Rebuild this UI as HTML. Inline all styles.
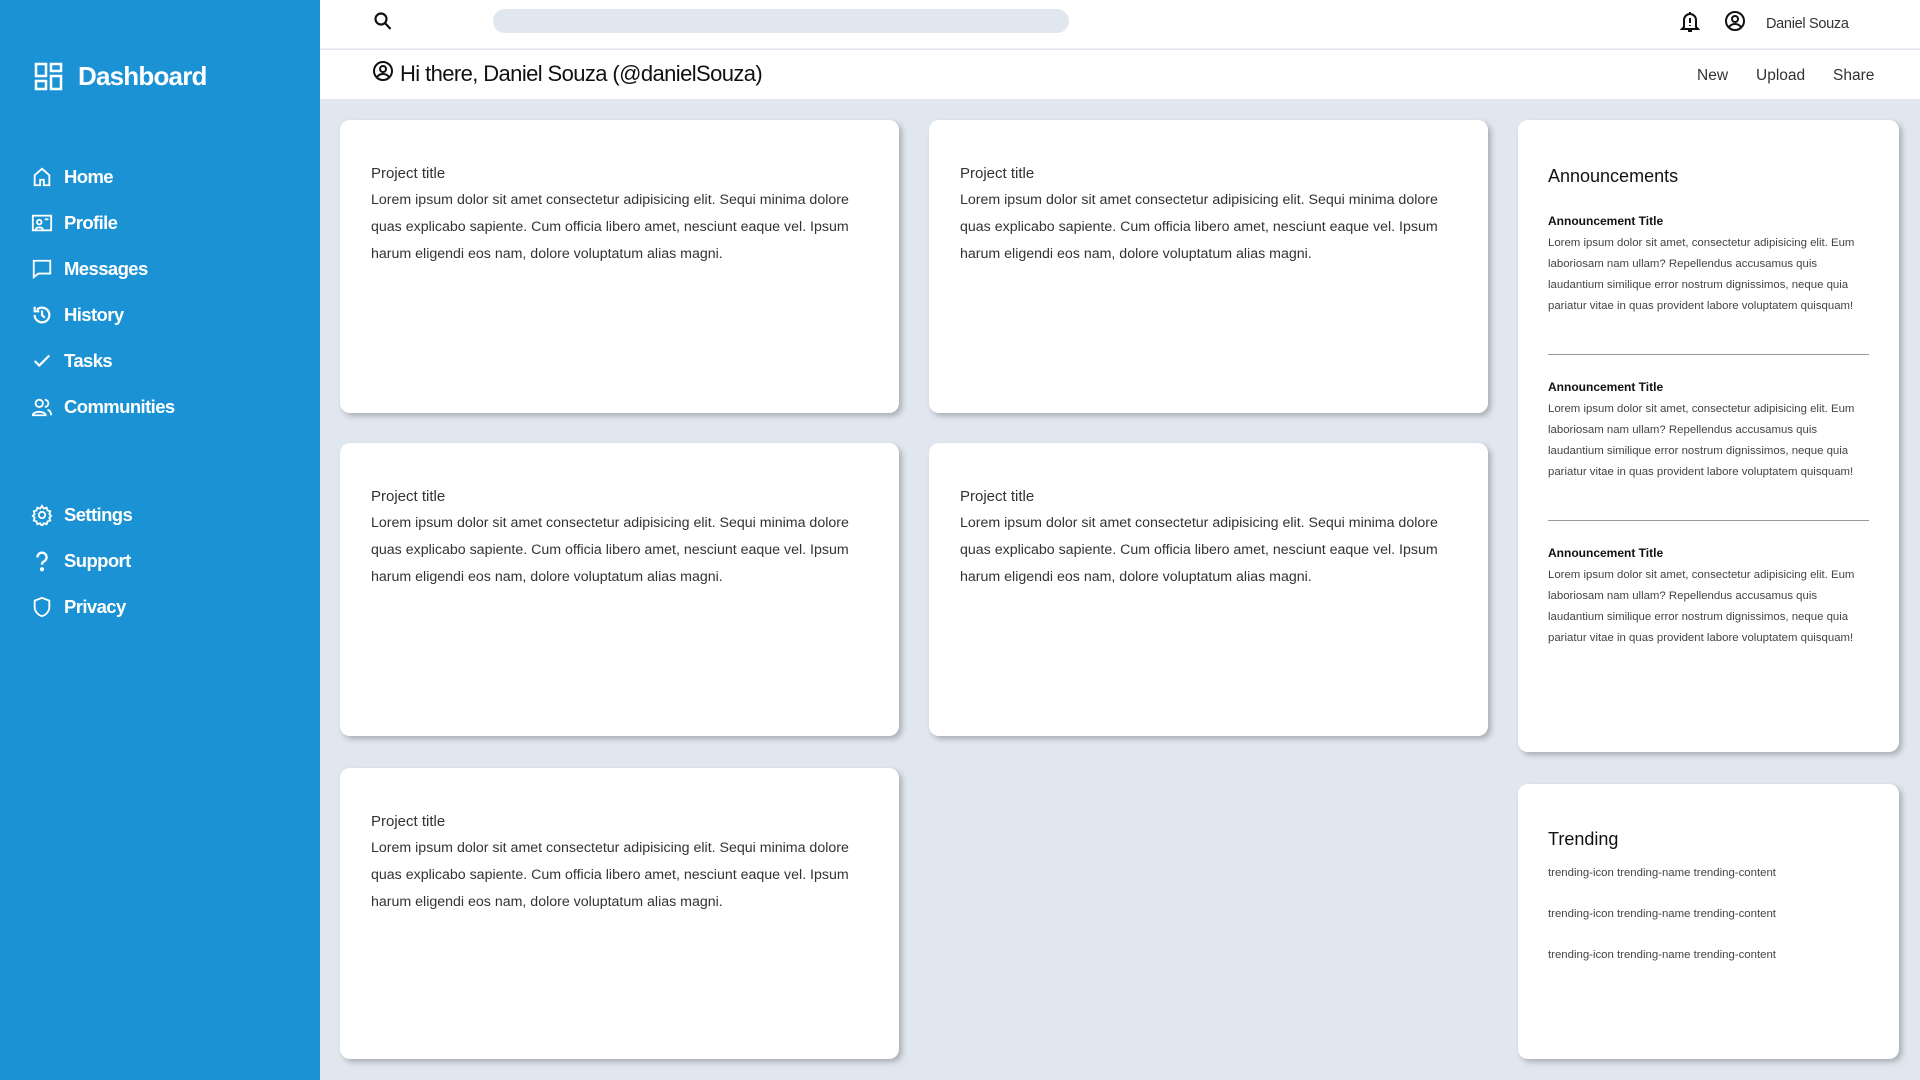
<!DOCTYPE html>
<html><head><meta charset="utf-8"><style>
*{box-sizing:border-box;margin:0;padding:0}
body{width:1920px;height:1080px;overflow:hidden;background:#e1e7ef;font-family:"Liberation Sans",sans-serif;position:relative;color:#222}
.side{position:absolute;left:0;top:0;width:320px;height:1080px;background:#1a92d3;color:#fff}
.logo{position:absolute;left:34px;top:61px;display:flex;align-items:center}
.logo span{font-size:26px;font-weight:bold;margin-left:15px;letter-spacing:-0.8px}
.nav{position:absolute;left:31px;display:flex;align-items:center;font-size:18.5px;font-weight:bold;letter-spacing:-0.6px}
.nav svg{width:22px;height:22px;margin-right:11px}
.top{position:absolute;left:320px;top:0;width:1600px;height:49px;background:#fff;border-bottom:1px solid #eef0f3}
.sub{position:absolute;left:320px;top:50px;width:1600px;height:49px;background:#fff}
.search{position:absolute;left:493px;top:9px;width:576px;height:24px;border-radius:12px;background:#e1e7ef}
.card{position:absolute;background:#fff;border-radius:10px;box-shadow:3px 3px 6px rgba(0,0,0,.25);padding:42px 31px}
.card h4{font-weight:normal;font-size:15px;color:#333;margin-top:3px}
.card p{font-size:14.2px;line-height:27px;color:#333;margin-top:5px}
.ann h3{font-size:18px;font-weight:normal;color:#111;margin-top:3px}
.ann h5{font-size:12px;color:#111;margin-top:0}
.ann p{font-size:11.4px;line-height:21px;color:#444}
.ann hr{border:0;border-top:1px solid #999;margin:37px 0 25px}
.tr div{font-size:11.4px;color:#444;height:41px}
</style></head><body>
<div class="side">
 <div class="logo"><svg width="29" height="29" viewBox="0 0 29 29" fill="none" stroke="#fff" stroke-width="2.5"><rect x="2" y="2" width="10" height="12"/><rect x="17" y="2" width="10" height="7"/><rect x="2" y="19" width="10" height="8"/><rect x="17" y="14" width="10" height="13"/></svg><span>Dashboard</span></div>
 <div class="nav" style="top:166px"><svg viewBox="0 0 24 24" fill="none" stroke="#fff" stroke-width="2"><path d="M4 21V10l8-7 8 7v11h-6v-6h-4v6z"/></svg>Home</div>
 <div class="nav" style="top:212px"><svg viewBox="0 0 24 24" fill="none" stroke="#fff" stroke-width="2"><rect x="2" y="4" width="20" height="16"/><circle cx="9" cy="11" r="2.5"/><path d="M5 19c1-3 7-3 8 0M15 8h4"/></svg>Profile</div>
 <div class="nav" style="top:258px"><svg viewBox="0 0 24 24" fill="none" stroke="#fff" stroke-width="2"><path d="M3 3h18v14H8l-5 4z"/></svg>Messages</div>
 <div class="nav" style="top:304px"><svg viewBox="0 0 24 24" fill="none" stroke="#fff" stroke-width="2.4"><path d="M4 12a8 8 0 1 0 2.5-5.8M4 3v5h5M12 7v5l3 3"/></svg>History</div>
 <div class="nav" style="top:350px"><svg viewBox="0 0 24 24" fill="none" stroke="#fff" stroke-width="2.4"><path d="M4 12l5 5L20 6"/></svg>Tasks</div>
 <div class="nav" style="top:396px"><svg viewBox="0 0 24 24" fill="none" stroke="#fff" stroke-width="2"><circle cx="9" cy="8" r="4"/><path d="M2 21c0-5 14-5 14 0zM15 4a4 4 0 0 1 0 8M18 15c3 1 4 3 4 6"/></svg>Communities</div>
 <div class="nav" style="top:504px"><svg viewBox="0 0 24 24" fill="none" stroke="#fff" stroke-width="2"><circle cx="12" cy="12" r="3.5"/><path d="M12 2l2 3 3-1 1 3 3 1-1 3 2 2-2 2 1 3-3 1-1 3-3-1-2 3-2-3-3 1-1-3-3-1 1-3-2-2 2-2-1-3 3-1 1-3 3 1z"/></svg>Settings</div>
 <div class="nav" style="top:550px"><svg viewBox="0 0 24 24" fill="none" stroke="#fff" stroke-width="2.6"><path d="M7 8a5 5 0 1 1 7 4.5c-1.5.8-2 1.5-2 3.5"/><circle cx="12" cy="21" r="1" fill="#fff"/></svg>Support</div>
 <div class="nav" style="top:596px"><svg viewBox="0 0 24 24" fill="none" stroke="#fff" stroke-width="2"><path d="M12 2l8 3v7c0 5-4 9-8 10-4-1-8-5-8-10V5z"/></svg>Privacy</div>
</div>
<div class="top">
 <svg style="position:absolute;left:53px;top:11px" width="20" height="20" viewBox="0 0 20 20" fill="none" stroke="#111" stroke-width="2.2"><circle cx="8" cy="8" r="5.5"/><path d="M12 12l5.5 6"/></svg>
 <div class="search" style="left:173px"></div>
 <svg style="position:absolute;left:1360px;top:11px" width="20" height="22" viewBox="0 0 20 22" fill="none" stroke="#111" stroke-width="2"><path d="M4 16V9a6 6 0 0 1 12 0v7l2 2H2zM10 1v2M8 20h4M10 7v5M10 14v1"/></svg>
 <svg style="position:absolute;left:1404px;top:10px" width="22" height="22" viewBox="0 0 22 22" fill="none" stroke="#111" stroke-width="2"><circle cx="11" cy="11" r="9"/><circle cx="11" cy="9" r="3"/><path d="M5 17c3-4 9-4 12 0"/></svg>
 <div style="position:absolute;left:1446px;top:16px;font-size:14.5px;color:#333;letter-spacing:-0.3px">Daniel Souza</div>
</div>
<div class="sub">
 <svg style="position:absolute;left:52px;top:10px" width="22" height="22" viewBox="0 0 22 22" fill="none" stroke="#111" stroke-width="2"><circle cx="11" cy="11" r="9"/><circle cx="11" cy="9" r="3"/><path d="M5 17c3-4 9-4 12 0"/></svg>
 <div style="position:absolute;left:80px;top:11px;font-size:22px;color:#111;letter-spacing:-0.6px">Hi there, Daniel Souza (@danielSouza)</div>
 <div style="position:absolute;left:1377px;top:17px;font-size:15.5px;color:#333">New</div>
 <div style="position:absolute;left:1436px;top:17px;font-size:15.5px;color:#333">Upload</div>
 <div style="position:absolute;left:1513px;top:17px;font-size:15.5px;color:#333">Share</div>
</div>
<div class="card" style="left:340px;top:120px;width:559px;height:293px"><h4>Project title</h4><p>Lorem ipsum dolor sit amet consectetur adipisicing elit. Sequi minima dolore quas explicabo sapiente. Cum officia libero amet, nesciunt eaque vel. Ipsum harum eligendi eos nam, dolore voluptatum alias magni.</p></div>
<div class="card" style="left:929px;top:120px;width:559px;height:293px"><h4>Project title</h4><p>Lorem ipsum dolor sit amet consectetur adipisicing elit. Sequi minima dolore quas explicabo sapiente. Cum officia libero amet, nesciunt eaque vel. Ipsum harum eligendi eos nam, dolore voluptatum alias magni.</p></div>
<div class="card" style="left:340px;top:443px;width:559px;height:293px"><h4>Project title</h4><p>Lorem ipsum dolor sit amet consectetur adipisicing elit. Sequi minima dolore quas explicabo sapiente. Cum officia libero amet, nesciunt eaque vel. Ipsum harum eligendi eos nam, dolore voluptatum alias magni.</p></div>
<div class="card" style="left:929px;top:443px;width:559px;height:293px"><h4>Project title</h4><p>Lorem ipsum dolor sit amet consectetur adipisicing elit. Sequi minima dolore quas explicabo sapiente. Cum officia libero amet, nesciunt eaque vel. Ipsum harum eligendi eos nam, dolore voluptatum alias magni.</p></div>
<div class="card" style="left:340px;top:768px;width:559px;height:291px"><h4>Project title</h4><p>Lorem ipsum dolor sit amet consectetur adipisicing elit. Sequi minima dolore quas explicabo sapiente. Cum officia libero amet, nesciunt eaque vel. Ipsum harum eligendi eos nam, dolore voluptatum alias magni.</p></div>
<div class="card ann" style="left:1518px;top:120px;width:381px;height:632px;padding:43px 30px">
 <h3>Announcements</h3>
 <h5 style="margin-top:27px">Announcement Title</h5><p>Lorem ipsum dolor sit amet, consectetur adipisicing elit. Eum laboriosam nam ullam? Repellendus accusamus quis laudantium similique error nostrum dignissimos, neque quia pariatur vitae in quas provident labore voluptatem quisquam!</p>
 <hr><h5>Announcement Title</h5><p>Lorem ipsum dolor sit amet, consectetur adipisicing elit. Eum laboriosam nam ullam? Repellendus accusamus quis laudantium similique error nostrum dignissimos, neque quia pariatur vitae in quas provident labore voluptatem quisquam!</p>
 <hr><h5>Announcement Title</h5><p>Lorem ipsum dolor sit amet, consectetur adipisicing elit. Eum laboriosam nam ullam? Repellendus accusamus quis laudantium similique error nostrum dignissimos, neque quia pariatur vitae in quas provident labore voluptatem quisquam!</p>
</div>
<div class="card ann tr" style="left:1518px;top:784px;width:381px;height:275px;padding:42px 30px">
 <h3 style="margin-bottom:17px">Trending</h3>
 <div>trending-icon trending-name trending-content</div>
 <div>trending-icon trending-name trending-content</div>
 <div>trending-icon trending-name trending-content</div>
</div>
</body></html>
